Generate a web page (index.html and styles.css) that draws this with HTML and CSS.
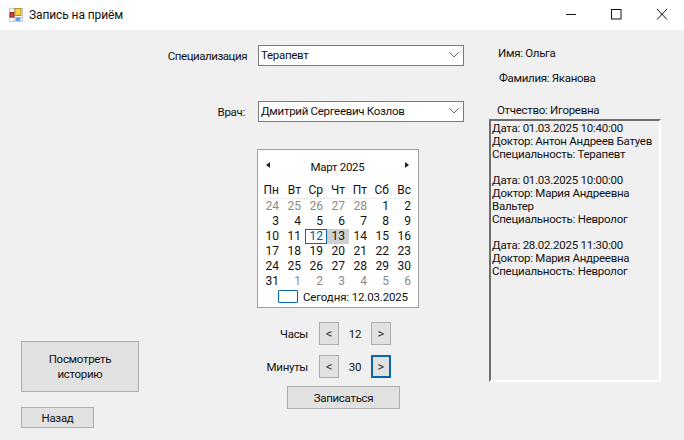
FILE: index.html
```html
<!DOCTYPE html>
<html lang="ru">
<head>
<meta charset="utf-8">
<title>Запись на приём</title>
<link rel="stylesheet" href="styles.css">
</head>
<body>
<div class="window">
  <header class="titlebar">
    <svg class="app-icon" width="14" height="14" viewBox="0 0 14 14">
      <rect x="0.5" y="0.5" width="13" height="13" fill="#fff" stroke="#c8c8c8"/>
      <path d="M0 9.5H14M5 0V14M9.500 9V14" stroke="#c8c8c8" fill="none"/>
      <rect x="1" y="4.500" width="4" height="4.500" fill="#d8413a" stroke="#8f2a22" stroke-width="1"/>
      <rect x="6" y="0.500" width="6" height="7" fill="#f7d24a" stroke="#b78f1c" stroke-width="1"/>
      <rect x="6.500" y="9.500" width="5" height="3.500" fill="#6f9fdc"/>
    </svg>
    <span class="title">Запись на приём</span>
    <div class="win-controls">
      <svg class="win-btn" width="46" height="30" viewBox="0 0 46 30"><path d="M20 14.500H30" stroke="#111" fill="none"/></svg>
      <svg class="win-btn" width="46" height="30" viewBox="0 0 46 30"><rect x="19.500" y="9.500" width="9.500" height="9.500" stroke="#111" fill="none"/></svg>
      <svg class="win-btn" width="46" height="30" viewBox="0 0 46 30"><path d="M19 9L29 19.500M29 9L19 19.500" stroke="#111" fill="none"/></svg>
    </div>
  </header>
  <main class="client">
    <section class="col-left">
      <button class="btn btn-history">Посмотреть<br>историю</button>
      <button class="btn btn-back">Назад</button>
    </section>
    <section class="col-mid">
      <div class="field field-spec">
        <label class="field-label label-spec">Специализация</label>
        <div class="combo"><span>Терапевт</span><svg width="10" height="6" viewBox="0 0 10 6"><path d="M0.500 0.500L5 5L9.500 0.500" stroke="#666" fill="none"/></svg></div>
      </div>
      <div class="field field-doc">
        <label class="field-label label-doc">Врач:</label>
        <div class="combo"><span>Дмитрий Сергеевич Козлов</span><svg width="10" height="6" viewBox="0 0 10 6"><path d="M0.500 0.500L5 5L9.500 0.500" stroke="#666" fill="none"/></svg></div>
      </div>
      <div class="calendar">
        <div class="cal-head">
          <span class="arrow arrow-left"></span>
          <span class="cal-month">Март 2025</span>
          <span class="arrow arrow-right"></span>
        </div>
        <div class="cal-grid cal-days">
          <span>Пн</span><span>Вт</span><span>Ср</span><span>Чт</span><span>Пт</span><span>Сб</span><span>Вс</span>
        </div>
        <div class="cal-grid">
          <span class="dim">24</span><span class="dim">25</span><span class="dim">26</span><span class="dim">27</span><span class="dim">28</span><span>1</span><span>2</span>
          <span>3</span><span>4</span><span>5</span><span>6</span><span>7</span><span>8</span><span>9</span>
          <span>10</span><span>11</span><span class="today">12</span><span class="selected">13</span><span>14</span><span>15</span><span>16</span>
          <span>17</span><span>18</span><span>19</span><span>20</span><span>21</span><span>22</span><span>23</span>
          <span>24</span><span>25</span><span>26</span><span>27</span><span>28</span><span>29</span><span>30</span>
          <span>31</span><span class="dim">1</span><span class="dim">2</span><span class="dim">3</span><span class="dim">4</span><span class="dim">5</span><span class="dim">6</span>
        </div>
        <div class="cal-foot"><span class="today-box"></span><span class="today-text">Сегодня: 12.03.2025</span></div>
      </div>
      <div class="spin spin-hours">
        <span class="spin-label">Часы</span>
        <button class="btn spin-btn">&lt;</button>
        <span class="spin-value">12</span>
        <button class="btn spin-btn">&gt;</button>
      </div>
      <div class="spin spin-mins">
        <span class="spin-label">Минуты</span>
        <button class="btn spin-btn">&lt;</button>
        <span class="spin-value">30</span>
        <button class="btn spin-btn focused">&gt;</button>
      </div>
      <button class="btn btn-submit">Записаться</button>
    </section>
    <section class="col-right">
      <div class="info info-name">Имя: Ольга</div>
      <div class="info info-last">Фамилия: Яканова</div>
      <div class="info info-mid">Отчество: Игоревна</div>
      <div class="history">Дата: 01.03.2025 10:40:00
Доктор: Антон Андреев Батуев
Специальность: Терапевт

Дата: 01.03.2025 10:00:00
Доктор: Мария Андреевна
Вальтер
Специальность: Невролог

Дата: 28.02.2025 11:30:00
Доктор: Мария Андреевна
Специальность: Невролог</div>
    </section>
  </main>
</div>
</body>
</html>
```
FILE: styles.css
```css
* { box-sizing: border-box; }
html, body { margin: 0; padding: 0; }
body {
  width: 684px;
  height: 440px;
  overflow: hidden;
  font-family: Roboto, "Noto Sans", "Liberation Sans", sans-serif;
  font-size: 11.5px;
  letter-spacing: -0.3px;
  color: #111;
  background: #f0f0f0;
}
.window { width: 684px; height: 440px; display: flex; flex-direction: column; }

.titlebar {
  flex: 0 0 30px;
  height: 30px;
  background: #fff;
  display: flex;
  align-items: center;
  padding-left: 9px;
}
.app-icon { margin-right: 6px; }
.title { font-size: 12px; letter-spacing: -0.1px; color: #111; }
.win-controls { margin-left: auto; display: flex; }
.win-btn { display: block; }

.client { flex: 1; display: flex; background: #f0f0f0; }

.btn {
  font: inherit;
  letter-spacing: inherit;
  color: #111;
  background: #e1e1e1;
  border: 1px solid #adadad;
  padding: 0;
  margin: 0;
  display: flex;
  align-items: center;
  justify-content: center;
  text-align: center;
}

.col-left {
  width: 150px;
  padding: 311px 0 0 21px;
  display: flex;
  flex-direction: column;
  align-items: flex-start;
}
.btn-history { width: 118px; height: 51px; line-height: 15px; }
.btn-back { width: 73px; height: 21px; margin-top: 15px; }

.col-mid { width: 340px; display: flex; flex-direction: column; align-items: flex-start; }
.field { display: flex; align-items: center; height: 21px; }
.field-spec { margin-top: 15px; }
.field-doc { margin-top: 35px; }
.field-label { width: 97px; text-align: right; }
.label-spec { margin-right: 11px; letter-spacing: -0.45px; }
.label-doc { margin-right: 13px; width: 95px; }
.combo {
  width: 206px;
  height: 21px;
  background: #fff;
  border: 1px solid #7a7a7a;
  display: flex;
  align-items: center;
  justify-content: space-between;
  padding: 0 4px 1px 2px;
}

.calendar {
  width: 162px;
  height: 159px;
  margin: 27px 0 0 107px;
  background: #fff;
  border: 1px solid #a0a0a0;
  padding: 8px 4px 0 3px;
}
.cal-head {
  height: 17px;
  display: flex;
  align-items: center;
  justify-content: space-between;
  padding: 0 5px 0 5px;
}
.arrow { width: 0; height: 0; margin-bottom: 3px; border-top: 3.5px solid transparent; border-bottom: 3.5px solid transparent; }
.arrow-left { border-right: 4px solid #222; }
.arrow-right { border-left: 4px solid #222; }
.cal-grid { display: grid; grid-template-columns: repeat(7, 22px); grid-auto-rows: 15px; line-height: 15px; text-align: right; font-size: 12px; letter-spacing: 0; }
.cal-grid span { padding-right: 4px; }
.cal-days { margin-top: 8px; height: 16px; border-bottom: 1px solid #ececec; }
.dim { color: #8a8a8a; }
.today { box-shadow: inset 0 0 0 1px #0a64b0; color: #0a4f8c; }
.selected { background: #d0d0d0; }
.cal-foot { display: flex; align-items: center; height: 15px; padding-left: 17px; }
.today-box { width: 20px; height: 13px; border: 1px solid #0a64b0; border-radius: 1px; margin-right: 5px; }
.today-text { white-space: nowrap; letter-spacing: -0.15px; }

.spin { display: flex; align-items: center; height: 23px; }
.spin-hours { margin-top: 14px; }
.spin-mins { margin-top: 10px; }
.spin-label { width: 158px; text-align: right; margin-right: 11px; }
.spin-btn { width: 20px; height: 23px; color: #333; font-size: 13px; letter-spacing: 0; }
.spin-value { width: 32px; text-align: center; }
.focused { border: 2px solid #0a64b0; }
.btn-submit { width: 113px; height: 23px; margin: 8px 0 0 137px; }

.col-right { flex: 1; }
.info { white-space: nowrap; }
.info-name { margin: 16px 0 0 8px; }
.info-last { margin: 11px 0 0 9px; }
.info-mid { margin: 18px 0 0 7px; }
.history {
  width: 172px;
  height: 263px;
  margin: 2px 0 0 -1px;
  border: 2px solid;
  border-color: #6e6e6e #fff #fff #6e6e6e;
  padding: 1px 0 0 1px;
  white-space: pre-wrap;
  line-height: 13px;
  letter-spacing: -0.25px;
  color: #111;
}
```
